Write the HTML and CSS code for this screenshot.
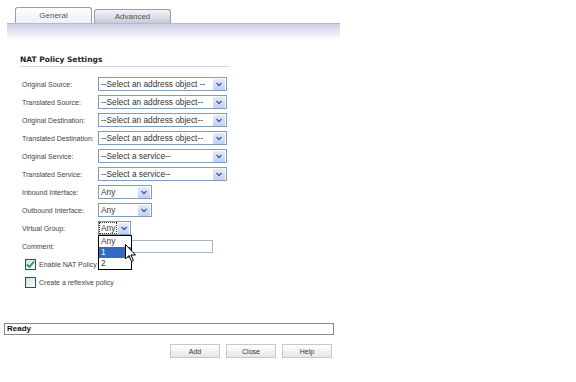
FILE: index.html
```html
<!DOCTYPE html>
<html>

<head>
    <title>NAT Policy</title>
    <link rel="stylesheet" href="styles.css">
</head>

<body>
    <div id="page">
        <div id="tabs">
            <div class="tab active">General</div>
            <div class="tab">Advanced</div>
        </div>
        <div id="band"></div>

        <div id="settings">
            <h2>NAT Policy Settings</h2>

            <div class="form">
                <label>Original Source:</label>
                <div class="select wide"><span>--Select an address object --</span><i class="arrow"></i></div>

                <label>Translated Source:</label>
                <div class="select wide"><span>--Select an address object--</span><i class="arrow"></i></div>

                <label>Original Destination:</label>
                <div class="select wide"><span>--Select an address object--</span><i class="arrow"></i></div>

                <label>Translated Destination:</label>
                <div class="select wide"><span>--Select an address object--</span><i class="arrow"></i></div>

                <label>Original Service:</label>
                <div class="select wide"><span>--Select a service--</span><i class="arrow"></i></div>

                <label>Translated Service:</label>
                <div class="select wide"><span>--Select a service--</span><i class="arrow"></i></div>

                <label>Inbound Interface:</label>
                <div class="select small"><span>Any</span><i class="arrow"></i></div>

                <label>Outbound Interface:</label>
                <div class="select small"><span>Any</span><i class="arrow"></i></div>

                <label>Virtual Group:</label>
                <div class="select tiny open">
                    <span class="focus">Any</span><i class="arrow"></i>
                    <ul class="dropdown">
                        <li>Any</li>
                        <li class="selected">1</li>
                        <li>2</li>
                    </ul>
                    <svg class="cursor" width="12" height="19" viewBox="0 0 12 19">
                        <path d="M0.5 0.5 L0.5 15 L4 11.5 L6.5 17.5 L8.5 16.5 L6 11 L10.5 11 Z" fill="#fff" stroke="#000" stroke-width="1" />
                    </svg>
                </div>

                <label>Comment:</label>
                <div class="text-input"></div>
            </div>

            <div class="check-row">
                <span class="checkbox checked">
                    <svg width="9" height="9" viewBox="0 0 9 9"><path d="M1 4.5 L3.5 7 L8 1.5" fill="none" stroke="#21a121" stroke-width="1.8" /></svg>
                </span>
                Enable NAT Policy
            </div>
            <div class="check-row">
                <span class="checkbox"></span>
                Create a reflexive policy
            </div>
        </div>

        <div id="status">Ready</div>

        <div id="buttons">
            <button class="button">Add</button>
            <button class="button">Close</button>
            <button class="button">Help</button>
        </div>
    </div>
</body>

</html>
```

FILE: styles.css
```css
body {
    margin: 0;
    padding: 0;
    background-color: #fff;
    font-family: "Liberation Sans", Tahoma, sans-serif;
    color: #333;
}

#page {
    width: 340px;
    padding-top: 7px;
}

#tabs {
    display: flex;
    align-items: flex-end;
    gap: 2px;
    padding-left: 15px;
    height: 16px;
}

.tab {
    width: 75px;
    height: 13px;
    border: 1px solid #9a9aa8;
    border-bottom: none;
    border-radius: 3px 3px 0 0;
    background: linear-gradient(#f4f4f8, #c9c9d9);
    font-size: 8px;
    line-height: 13px;
    text-align: center;
    color: #555;
}

.tab.active {
    height: 15px;
    line-height: 15px;
    background: linear-gradient(#ffffff, #eeeef6);
}

#band {
    margin-left: 7px;
    height: 16px;
    border-top: 1px solid #b8b8cc;
    background: linear-gradient(#cfcfe6, #ffffff);
}

#settings {
    padding: 15px 0 0 20px;
}

h2 {
    margin: 0;
    width: 210px;
    font-family: "DejaVu Sans", sans-serif;
    font-size: 7.5px;
    font-weight: bold;
    color: #222;
    padding-bottom: 2px;
    border-bottom: 1px solid #d8d8d8;
}

.form {
    display: grid;
    grid-template-columns: 76px auto;
    grid-auto-rows: 18px;
    align-items: center;
    margin-top: 8px;
    margin-left: 2px;
}

label {
    font-size: 7px;
    color: #444;
}

.select {
    position: relative;
    display: flex;
    align-items: center;
    height: 12px;
    border: 1px solid #7f9db9;
    background-color: #fff;
    font-size: 8.3px;
    color: #333;
}

.select span {
    flex: 1;
    padding-left: 2px;
    white-space: nowrap;
    overflow: hidden;
}

.select.wide {
    width: 127px;
}

.select.small {
    width: 52px;
}

.select.tiny {
    width: 31px;
}

.arrow {
    width: 12px;
    height: 11px;
    margin-right: 1px;
    border-radius: 1px;
    background-image: url("data:image/svg+xml,%3Csvg xmlns='http://www.w3.org/2000/svg' width='12' height='11'%3E%3Cpath d='M3.5 4 L6 6.5 L8.5 4' fill='none' stroke='%234d6185' stroke-width='1.4'/%3E%3C/svg%3E"), linear-gradient(#e3ebfd, #bfd0f7);
}

.select .focus {
    flex: none;
    padding: 0 1px;
    margin-left: 1px;
    margin-right: 2px;
    outline: 1px dotted #333;
}

.dropdown {
    position: absolute;
    left: -1px;
    top: 13px;
    width: 32px;
    margin: 0;
    padding: 0;
    list-style: none;
    border: 1px solid #000;
    background-color: #fff;
    z-index: 2;
}

.dropdown li {
    height: 11px;
    line-height: 11px;
    padding-left: 2px;
    font-size: 8.3px;
}

.dropdown li.selected {
    background-color: #316ac5;
    color: #fff;
}

.cursor {
    position: absolute;
    left: 26px;
    top: 22px;
    z-index: 3;
}

.text-input {
    width: 113px;
    height: 11px;
    border: 1px solid #a5b8c8;
}

.check-row {
    display: flex;
    align-items: center;
    gap: 3px;
    height: 18px;
    margin-left: 5px;
    font-size: 7px;
    color: #444;
}

.checkbox {
    display: inline-flex;
    align-items: center;
    justify-content: center;
    width: 9px;
    height: 9px;
    border: 1px solid #1c5180;
    background: linear-gradient(135deg, #dcdcd7, #ffffff);
}

#status {
    margin: 32px 0 0 4px;
    width: 326px;
    height: 10px;
    border: 1px solid #888;
    padding-left: 2px;
    font-size: 8px;
    font-weight: bold;
    line-height: 10px;
    color: #111;
}

#buttons {
    display: flex;
    gap: 6px;
    padding: 9px 0 0 170px;
}

.button {
    width: 50px;
    height: 14px;
    padding: 0;
    border: 1px solid #c8c8c8;
    background: linear-gradient(#ffffff, #e6e6e6);
    font-family: "Liberation Sans", Tahoma, sans-serif;
    font-size: 7px;
    color: #333;
}
```
